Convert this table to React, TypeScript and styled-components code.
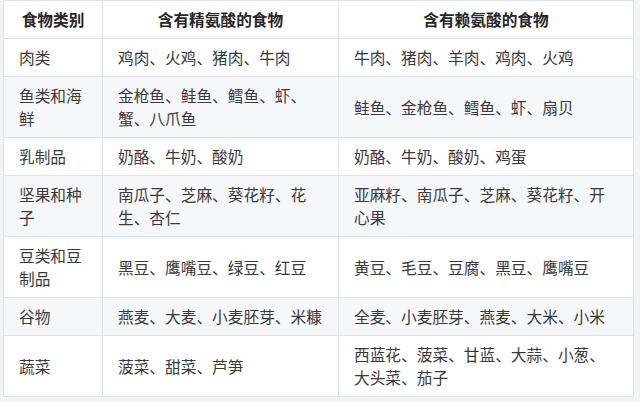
import React from "react";
import styled, { createGlobalStyle } from "styled-components";

const Global = createGlobalStyle`
  html, body {
    margin: 0;
    padding: 0;
    background: #f2f3f5;
  }
  body {
    font-family: "Noto Sans CJK SC", "Noto Sans", sans-serif;
    -webkit-font-smoothing: antialiased;
  }
`;

const Page = styled.div`
  width: 640px;
  height: 402px;
  overflow: hidden;
  padding: 0 0 0 3px;
  box-sizing: border-box;
`;

const Table = styled.table`
  border-collapse: collapse;
  table-layout: fixed;
  width: 631px;
  background: #ffffff;
  font-size: 15.7px;
  line-height: 23px;
  color: #3a3a3a;
`;

const HeadCell = styled.th`
  border: 1px solid #dfe2e6;
  padding: 7px 15px;
  font-weight: 700;
  color: #262626;
  text-align: center;
  vertical-align: middle;
`;

const Row = styled.tr<{ $striped: boolean }>`
  background: ${(p) => (p.$striped ? "#f6f7f9" : "#ffffff")};
`;

const Cell = styled.td`
  border: 1px solid #dfe2e6;
  padding: 7px 15px;
  text-align: left;
  vertical-align: middle;
  word-break: normal;
`;

const rows: [string, string, string][] = [
  ["肉类", "鸡肉、火鸡、猪肉、牛肉", "牛肉、猪肉、羊肉、鸡肉、火鸡"],
  ["鱼类和海鲜", "金枪鱼、鲑鱼、鳕鱼、虾、蟹、八爪鱼", "鲑鱼、金枪鱼、鳕鱼、虾、扇贝"],
  ["乳制品", "奶酪、牛奶、酸奶", "奶酪、牛奶、酸奶、鸡蛋"],
  ["坚果和种子", "南瓜子、芝麻、葵花籽、花生、杏仁", "亚麻籽、南瓜子、芝麻、葵花籽、开心果"],
  ["豆类和豆制品", "黑豆、鹰嘴豆、绿豆、红豆", "黄豆、毛豆、豆腐、黑豆、鹰嘴豆"],
  ["谷物", "燕麦、大麦、小麦胚芽、米糠", "全麦、小麦胚芽、燕麦、大米、小米"],
  ["蔬菜", "菠菜、甜菜、芦笋", "西蓝花、菠菜、甘蓝、大蒜、小葱、大头菜、茄子"],
];

export default function App() {
  return (
    <>
      <Global />
      <Page>
        <Table>
          <colgroup>
            <col style={{ width: 99 }} />
            <col style={{ width: 236 }} />
            <col style={{ width: 295 }} />
          </colgroup>
          <thead>
            <tr>
              <HeadCell>食物类别</HeadCell>
              <HeadCell>含有精氨酸的食物</HeadCell>
              <HeadCell>含有赖氨酸的食物</HeadCell>
            </tr>
          </thead>
          <tbody>
            {rows.map((r, i) => (
              <Row key={r[0]} $striped={i % 2 === 1}>
                <Cell>{r[0]}</Cell>
                <Cell>{r[1]}</Cell>
                <Cell>{r[2]}</Cell>
              </Row>
            ))}
          </tbody>
        </Table>
      </Page>
    </>
  );
}
